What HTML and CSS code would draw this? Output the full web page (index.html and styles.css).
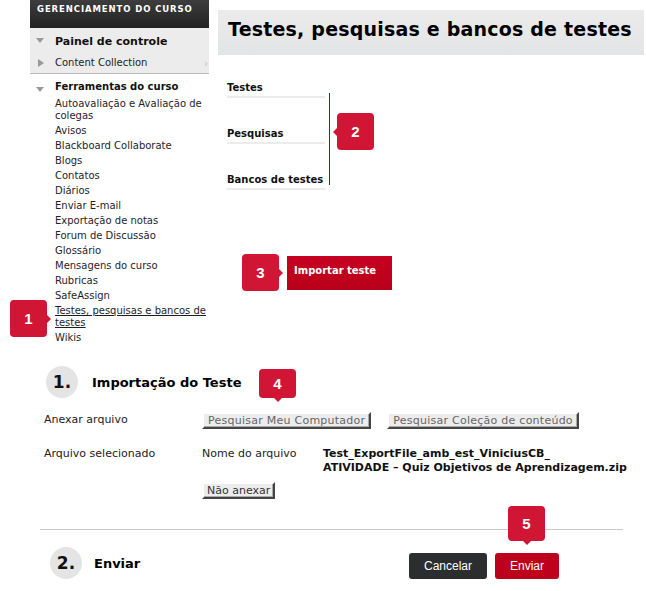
FILE: index.html
```html
<!DOCTYPE html>
<html lang="pt">
<head>
<meta charset="utf-8">
<link rel="stylesheet" href="styles.css">
</head>
<body>
<div class="page">
  <div class="top">
    <nav class="sidebar">
      <div class="sb-head">GERENCIAMENTO DO CURSO</div>
      <div class="sb-panel">
        <div class="sb-row sb-row-main"><span class="tri-down"></span>Painel de controle</div>
        <div class="sb-row sb-row-sub"><span class="tri-right"></span>Content Collection<span class="chev">›</span></div>
      </div>
      <div class="sb-tools">
        <div class="sb-tools-head"><span class="tri-down"></span>Ferramentas do curso</div>
        <ul class="sb-list">
          <li>Autoavaliação e Avaliação de colegas</li>
          <li>Avisos</li>
          <li>Blackboard Collaborate</li>
          <li>Blogs</li>
          <li>Contatos</li>
          <li>Diários</li>
          <li>Enviar E-mail</li>
          <li>Exportação de notas</li>
          <li>Forum de Discussão</li>
          <li>Glossário</li>
          <li>Mensagens do curso</li>
          <li>Rubricas</li>
          <li>SafeAssign</li>
          <li class="current">Testes, pesquisas e bancos de testes
            <span class="callout callout-right c1">1</span>
          </li>
          <li>Wikis</li>
        </ul>
      </div>
    </nav>
    <main class="main">
      <h1 class="title">Testes, pesquisas e bancos de testes</h1>
      <div class="tabs-wrap">
        <ul class="tabs">
          <li>Testes</li>
          <li>Pesquisas</li>
          <li>Bancos de testes</li>
        </ul>
        <div class="tabs-bar"></div>
        <span class="callout callout-left c2">2</span>
      </div>
      <div class="import-row">
        <span class="callout callout-right c3">3</span>
        <button class="btn-import">Importar teste</button>
      </div>
    </main>
  </div>

  <section class="step step1">
    <div class="step-head">
      <span class="step-num">1.</span>
      <h2>Importação do Teste</h2>
    </div>
    <div class="field">
      <div class="label">Anexar arquivo</div>
      <div class="value buttons">
        <span class="btn-wrap">
          <button class="btn-gray">Pesquisar Meu Computador</button>
          <span class="callout callout-down c4">4</span>
        </span>
        <button class="btn-gray">Pesquisar Coleção de conteúdo</button>
      </div>
    </div>
    <div class="field field-file">
      <div class="label">Arquivo selecionado</div>
      <div class="value">
        <div class="file-line">
          <span class="file-label">Nome do arquivo</span>
          <span class="file-name">Test_ExportFile_amb_est_ViniciusCB_<br>ATIVIDADE – Quiz Objetivos de Aprendizagem.zip</span>
        </div>
        <button class="btn-gray btn-small">Não anexar</button>
      </div>
    </div>
  </section>

  <section class="step2">
    <div class="step-head">
      <span class="step-num">2.</span>
      <h2>Enviar</h2>
    </div>
    <div class="actions">
      <button class="btn-dark">Cancelar</button>
      <span class="btn-wrap">
        <button class="btn-red">Enviar</button>
        <span class="callout callout-down c5">5</span>
      </span>
    </div>
  </section>
</div>
</body>
</html>
```
FILE: styles.css
```css
* { box-sizing: border-box; }
html, body { margin: 0; padding: 0; background: #fff; }
body { font-family: "DejaVu Sans", Verdana, sans-serif; color: #1a1a1a; width: 646px; height: 591px; overflow: hidden; }
ul { list-style: none; margin: 0; padding: 0; }
button { font-family: inherit; margin: 0; cursor: pointer; }

.page { position: relative; }

.top { display: grid; grid-template-columns: 179px 426px; column-gap: 9px; padding-left: 30px; }

/* Sidebar */
.sidebar { width: 179px; }
.sb-head {
  height: 28px; padding: 4px 0 0 7px;
  background: linear-gradient(#3d3d3d, #222);
  color: #fff; font-size: 8.5px; font-weight: bold; letter-spacing: 0.9px; white-space: nowrap;
}
.sb-panel { background: #ececec; border-bottom: 1px solid #bdbdbd; height: 46px; }
.sb-row { position: relative; display: flex; align-items: center; padding-left: 25px; }
.sb-row-main { height: 24px; font-size: 11px; font-weight: bold; color: #111; padding-top: 2px; }
.sb-row-sub { height: 21px; font-size: 10px; color: #222; }
.chev { position: absolute; right: 1px; top: 6px; color: #bbb; font-size: 10px; }
.tri-down {
  position: absolute; left: 6px; top: 50%; margin-top: -2px;
  width: 0; height: 0; border-left: 4px solid transparent; border-right: 4px solid transparent; border-top: 5px solid #999;
}
.tri-right {
  position: absolute; left: 8px; top: 50%; margin-top: -4px;
  width: 0; height: 0; border-top: 4px solid transparent; border-bottom: 4px solid transparent; border-left: 6px solid #999;
}
.sb-tools { padding-top: 7px; }
.sb-tools-head { position: relative; font-size: 10px; font-weight: bold; color: #111; padding-left: 25px; height: 16px; line-height: 12px; }
.sb-list { padding-left: 25px; padding-top: 1px; }
.sb-list li { font-size: 10px; line-height: 12px; color: #1e1e2a; margin-bottom: 3px; position: relative; }
.sb-list li.current { text-decoration: underline; }

/* Main */
.main { padding-top: 10px; position: relative; }
.title {
  margin: 0; height: 45px; padding: 8px 0 0 10px;
  background: linear-gradient(#ebebec, #e3e4e5);
  font-size: 19px; font-weight: bold; color: #000; letter-spacing: 0.2px; white-space: nowrap;
}
.tabs-wrap { position: relative; display: flex; padding-top: 24px; padding-left: 9px; }
.tabs { width: 98px; }
.tabs li {
  font-size: 10px; font-weight: bold; color: #111;
  display: flex; align-items: flex-start;
  border-bottom: 2px solid #ececec; height: 35px; margin-bottom: 11px;
  padding-top: 19px;
}
.tabs li:first-child { height: 19px; padding-top: 3px; }
.tabs-bar { width: 1px; background: #a3001b; margin-left: 4px; margin-top: 14px; height: 92px; }

.import-row { display: flex; align-items: center; margin-top: 53px; margin-left: 24px; }
.btn-import {
  width: 105px; height: 34px; border: 0;
  background: linear-gradient(#c70020, #b80019);
  color: #fff; font-size: 10px; font-weight: bold; text-align: left; padding: 0 0 4px 7px;
  display: flex; align-items: center;
}

/* Callouts */
.callout {
  position: absolute; width: 37px; height: 37px; border-radius: 4px;
  background: #d01634; color: #fff;
  font-family: "Liberation Sans", Arial, sans-serif; font-weight: bold; font-size: 15px;
  display: flex; align-items: center; justify-content: center; text-decoration: none;
}
.callout::after { content: ""; position: absolute; width: 0; height: 0; }
.callout-right::after { right: -4px; top: 50%; margin-top: -4px; border-top: 4px solid transparent; border-bottom: 4px solid transparent; border-left: 4px solid #d01634; }
.callout-left::after { left: -4px; top: 50%; margin-top: -4px; border-top: 4px solid transparent; border-bottom: 4px solid transparent; border-right: 4px solid #d01634; }
.callout-down::after { bottom: -4px; left: 50%; margin-left: -4px; border-left: 4px solid transparent; border-right: 4px solid transparent; border-top: 4px solid #d01634; }

.c1 { left: -45px; top: -5px; }
.c2 { left: 119px; top: 58px; }
.c3 { position: relative; margin-right: 8px; }
.c4 { left: 57px; top: -43px; height: 29px; }
.c5 { left: 13px; top: -47px; height: 35px; }

/* Steps */
.step { padding: 0 0 0 40px; }
.step1 { margin-top: 19px; }
.step-head { display: flex; align-items: center; }
.step-num {
  width: 32px; height: 32px; border-radius: 50%;
  background: #e4e4e4; display: flex; align-items: center; justify-content: center;
  font-size: 17px; font-weight: bold; color: #111;
}
.step1 .step-head { padding-left: 6px; }
.step-head h2 { margin: 0 0 0 14px; font-size: 13px; font-weight: bold; color: #000; }

.field { display: flex; font-size: 11px; color: #222; }
.label { width: 162px; padding-left: 4px; }
.step1 .field { margin-top: 15px; }
.buttons { display: flex; gap: 16px; margin-top: -1px; }
.btn-wrap { position: relative; display: inline-block; }
.btn-gray {
  height: 17px; padding: 0 4px;
  background: #ececec; color: #666; font-size: 11px; letter-spacing: 0.25px;
  border: 2px solid; border-color: #fff #444 #444 #fff;
  box-shadow: inset -1px -1px 0 #aaa;
  line-height: 12px;
}
.step1 .field-file { margin-top: 18px; }
.file-line { display: flex; }
.file-label { width: 121px; }
.file-name { font-weight: bold; color: #111; line-height: 14px; }
.btn-small { margin-top: 7px; color: #333; letter-spacing: 0; padding: 0 3px; }

.step2 {
  margin: 30px 0 0 40px; width: 583px;
  border-top: 1px solid #c8c8c8;
  padding: 17px 0 0 10px;
  display: flex; justify-content: space-between; align-items: center;
}
.step2 .step-head h2 { margin-left: 12px; font-size: 13px; }
.actions { display: flex; gap: 8px; margin-right: 64px; margin-top: 6px; }
.btn-dark, .btn-red {
  height: 26px; border: 0; border-radius: 3px; color: #fff;
  font-family: "Liberation Sans", Arial, sans-serif; font-size: 12px;
}
.btn-dark { width: 78px; background: #2b2d2f; }
.btn-red { width: 64px; background: #bd001c; }
```
